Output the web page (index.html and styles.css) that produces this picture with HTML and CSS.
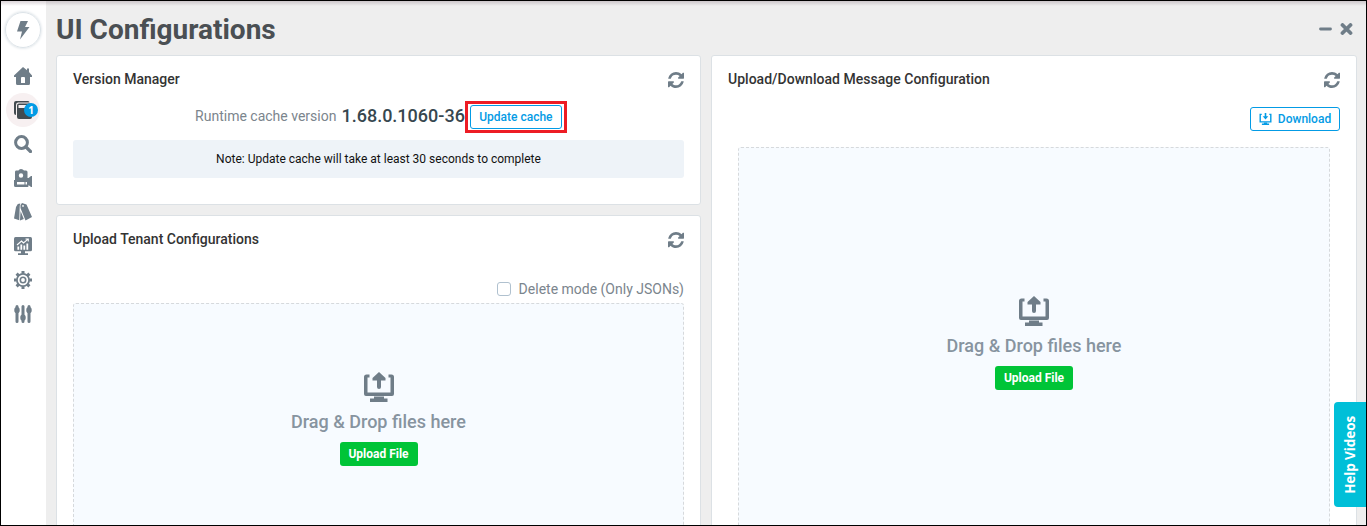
FILE: index.html
```html
<!DOCTYPE html>
<html lang="en">
<head>
<meta charset="utf-8">
<title>UI Configurations</title>
<link rel="stylesheet" href="styles.css">
</head>
<body>
<svg class="defs" aria-hidden="true">
  <symbol id="refresh" viewBox="0 0 1536 1536"><path d="M1511 928q0 5-1 7-64 268-268 434.500t-478 166.500q-146 0-282.500-55t-243.500-157l-129 129q-19 19-45 19t-45-19-19-45v-448q0-26 19-45t45-19h448q26 0 45 19t19 45-19 45l-137 137q71 66 161 102t187 36q134 0 250-65t186-179q11-17 53-117 8-23 30-23h192q13 0 22.500 9.500t9.500 22.500zm25-800v448q0 26-19 45t-45 19h-448q-26 0-45-19t-19-45 19-45l138-138q-148-137-349-137-134 0-250 65t-186 179q-11 17-53 117-8 23-30 23h-199q-13 0-22.500-9.500t-9.500-22.500v-7q65-268 270-434.500t480-166.500q146 0 284 55.500t245 156.500l130-129q19-19 45-19t45 19 19 45z"/></symbol>
  <symbol id="upload" viewBox="0 0 30 30"><path d="M5.500 2.500H2.500Q0 2.500 0 5V22Q0 24 2 24H28Q30 24 30 22V5Q30 2.500 27.500 2.500H24.500V5.500H26.500V20.500H3.500V5.500H5.500ZM10 24.500H20V26.500H23.500V30H6V26.500H10ZM15 0L21.500 6V8.500H17V15Q17 17 15 17T13 15V8.500H8.500V6Z"/></symbol>
  <symbol id="download" viewBox="0 0 30 30"><path d="M5.500 2H0V24H30V2H24.500V5H26.500V20.500H3.500V5H5.500ZM11 24.500H19V26.500H24V30H6V26.500H11ZM13 0H17V8H22L15 16L8 8H13Z"/></symbol>
</svg>
<div class="frame">
  <nav class="sidebar">
    <a class="logo"><svg width="14" height="20" viewBox="0 0 14 20"><path d="M4.500 1H12L9 7H13.500L4 19.500L6 11.500H1Z"/></svg></a>
    <a class="nav-item"><svg viewBox="0 0 18 18"><path fill-rule="evenodd" d="M9 0L13 3.300V1.500H15V5L18 8.500V10H16V16.500Q16 18 14.500 18H3.500Q2 18 2 16.500V10H0V8.500ZM7 11V16H11V11Q11 10 10 10H8Q7 10 7 11Z"/></svg></a>
    <a class="nav-item active"><svg viewBox="0 0 18 18"><path d="M2 0H14Q15.500 0 15.500 1.500H4Q2 1.500 2 4V14Q0 14 0 12V2Q0 0 2 0Z"/><path fill-rule="evenodd" d="M5 2.500H16Q18 2.500 18 4.500V16Q18 18 16 18H5Q3 18 3 16V4.500Q3 2.500 5 2.500ZM4.500 4V7H17V4Z"/></svg><span class="badge">1</span></a>
    <a class="nav-item"><svg viewBox="0 0 18 18"><circle cx="7.500" cy="7.500" r="5.900" fill="none" stroke="currentColor" stroke-width="3"/><path d="M12 12L16.500 16.500" stroke="currentColor" stroke-width="3.200" stroke-linecap="round"/></svg></a>
    <a class="nav-item"><svg viewBox="0 0 18 18"><path fill-rule="evenodd" d="M2 1.500H4.500Q5 0 7 0T10 1.500H12Q13.500 1.500 13.500 3V9H14.500L17 7H18V18H17L14.500 16V17Q14.500 18 13.500 18H1.500Q0 18 0 16.500V11H1V3Q1 1.500 2 1.500ZM7 4.300A2.200 2.200 0 1 0 7 8.700A2.200 2.200 0 1 0 7 4.300ZM3 13V15.500H10.500V13ZM11.500 13V15.500H13V13Z"/></svg></a>
    <a class="nav-item"><svg viewBox="0 0 18 18"><path fill-rule="evenodd" d="M3.800 1L6.300 .4Q5.700 2 5.700 4L5.300 17.300L0 15.500L2 4ZM8 0L12.500 1.500L18 14L11.500 17.500L6.500 5V2ZM9 2A.9 .9 0 1 0 9 3.800A.9 .9 0 1 0 9 2Z"/><path d="M6.600 8L9.800 16L6 17.400Z"/></svg></a>
    <a class="nav-item"><svg viewBox="0 0 18 18"><rect width="18" height="14.300" rx="1.500"/><path d="M7 14H11V16.300H14V18H4V16.300H7Z"/><g fill="none" stroke="#fff"><path stroke-width="1.800" d="M4.300 12.700V9.500M7.300 12.700V7.500M10.300 12.700V8.500M13.300 12.700V6.500"/><path stroke-width="1.100" d="M3 8L7.500 4L9.500 6L14 2.200M11.500 2H14.300V4.500"/></g></svg></a>
    <a class="nav-item"><svg viewBox="0 0 18 18"><g fill="none" stroke="currentColor"><circle cx="9" cy="9" r="6.100" stroke-width="1.800"/><circle cx="9" cy="9" r="2.700" stroke-width="1.600"/><path stroke-width="3" d="M9 0V2.800M9 15.200V18M0 9H2.800M15.200 9H18M2.600 2.600L4.600 4.600M13.400 13.400L15.400 15.400M2.600 15.400L4.600 13.400M13.400 4.600L15.400 2.600"/></g></svg></a>
    <a class="nav-item"><svg viewBox="0 0 18 18"><g stroke="currentColor" stroke-linecap="round"><path stroke-width="3" d="M3 1.500V16.500M9 1.500V16.500M15 1.500V16.500"/><path stroke-width="5.400" d="M3 4.800V5.600M9 12.200V13M15 4.800V5.600"/></g></svg></a>
  </nav>
  <main class="main">
    <header class="header">
      <h1 class="title">UI Configurations</h1>
      <svg class="controls" width="34" height="12" viewBox="0 0 34 12"><path d="M1.500 6H11.500" stroke-width="2.800"/><path d="M23.500 2L31.500 10M31.500 2L23.500 10" stroke-width="3.800"/></svg>
    </header>
    <div class="columns">
      <div class="column">
        <section class="card version">
          <div class="card-head"><h2>Version Manager</h2><svg class="refresh"><use href="#refresh"/></svg></div>
          <div class="runtime"><span class="label">Runtime cache version</span><strong>1.68.0.1060-36</strong><span class="highlight"><button class="outline update">Update cache</button></span></div>
          <div class="note">Note: Update cache will take at least 30 seconds to complete</div>
        </section>
        <section class="card tenant">
          <div class="card-head"><h2>Upload Tenant Configurations</h2><svg class="refresh"><use href="#refresh"/></svg></div>
          <label class="delete-mode"><span class="checkbox"></span>Delete mode (Only JSONs)</label>
          <div class="dropzone tenant-drop">
            <svg class="upload-icon"><use href="#upload"/></svg>
            <p>Drag &amp; Drop files here</p>
            <button class="upload-button">Upload File</button>
          </div>
        </section>
      </div>
      <section class="card message">
        <div class="card-head"><h2>Upload/Download Message Configuration</h2><svg class="refresh"><use href="#refresh"/></svg></div>
        <button class="outline download"><svg><use href="#download"/></svg>Download</button>
        <div class="dropzone message-drop">
          <svg class="upload-icon"><use href="#upload"/></svg>
          <p>Drag &amp; Drop files here</p>
          <button class="upload-button">Upload File</button>
        </div>
      </section>
    </div>
  </main>
  <div class="help"><span>Help Videos</span></div>
</div>
</body>
</html>
```
FILE: styles.css
```css
* { box-sizing: border-box; }
body { margin: 0; font-family: Roboto, "Liberation Sans", sans-serif; font-size: 14px; color: #333; }
h1, h2, p { margin: 0; }
button { font-family: inherit; margin: 0; }
.defs { display: none; }
.frame { position: relative; display: flex; width: 1367px; height: 526px; border: 1px solid #000; overflow: hidden; background: #eee; }
.frame::before { content: ""; position: absolute; left: 0; right: 0; top: 0; height: 5px; background: linear-gradient(rgba(70, 40, 60, .2), transparent); }
.sidebar { width: 45px; flex: none; background: #fff; display: flex; flex-direction: column; align-items: center; padding-top: 11px; color: #6f7d88; }
.logo { width: 36px; height: 36px; flex: none; margin: 0 1px 11px 0; border-radius: 50%; border: 1px solid #dce3e8; box-shadow: 0 0 3px #ccd5dc; display: flex; align-items: center; justify-content: center; }
.sidebar svg, .refresh, .upload-icon { fill: currentColor; }
.nav-item { position: relative; width: 34px; height: 34px; flex: none; display: flex; align-items: center; justify-content: center; margin-right: 1px; border-radius: 50%; }
.nav-item svg { width: 18px; height: 18px; }
.active { color: #434b50; background: #f7f0f1; }
.badge { position: absolute; left: 18px; top: 10px; width: 14px; height: 14px; border-radius: 50%; background: #039be5; color: #fff; font: 700 10px/14px "Open Sans", sans-serif; text-align: center; }
.main { flex: 1; min-width: 0; padding: 0 9px 0 10px; }
.header { height: 54px; display: flex; justify-content: space-between; align-items: center; padding-right: 4px; }
.title { font-size: 28px; line-height: 36px; font-weight: 700; color: #4a4f53; padding-top: 4px; }
.controls { stroke: #6f7d88; fill: none; stroke-linecap: round; margin-top: 2px; }
.columns { display: grid; grid-template-columns: 645px 646px; gap: 10px; align-items: start; }
.column { display: flex; flex-direction: column; gap: 10px; }
.card { background: #fff; border: 1px solid #dce1e5; border-radius: 3px; padding: 0 16px; }
.version { height: 150px; }
.tenant { height: 400px; }
.message { height: 560px; display: flex; flex-direction: column; }
.card-head { height: 47px; flex: none; display: flex; align-items: center; justify-content: space-between; padding-bottom: 2px; }
.card-head h2 { font-size: 14px; font-weight: 500; line-height: 20px; }
.message h2 { letter-spacing: .02px; }
.refresh { width: 16px; height: 16px; margin-top: 2px; color: #6f7d88; }
.runtime { height: 32px; margin-top: -2px; padding-left: 5px; display: flex; align-items: center; justify-content: center; }
.label { color: #7b858d; padding-bottom: 2px; }
.runtime strong { font-weight: 500; font-size: 18px; color: #37474f; margin-left: 5px; padding-bottom: 3px; }
.highlight { width: 102px; height: 32px; border: 3px solid #ed1c24; display: flex; align-items: center; justify-content: center; }
.outline { background: #fff; border: 1px solid #039be5; border-radius: 3px; color: #039be5; font-size: 12px; font-weight: 500; padding: 0; white-space: nowrap; }
.update { width: 92px; height: 24px; }
.note { height: 38px; line-height: 38px; margin-top: 7px; background: #eef3f8; border-radius: 3px; color: #111; text-align: center; font-size: 12px; }
.delete-mode { display: flex; align-items: center; justify-content: flex-end; height: 20px; margin-top: 16px; color: #7b858d; }
.checkbox { width: 14px; height: 14px; border: 1px solid #b0c1cf; border-radius: 3px; margin-right: 8px; }
.dropzone { border: 1px dashed #d6d9dc; border-radius: 3px; background: #f7fbff; display: flex; flex-direction: column; align-items: center; color: #6f7d88; }
.tenant-drop { height: 300px; margin-top: 4px; padding-top: 68px; }
.message-drop { height: 390px; margin: 16px 10px 0; padding-top: 148px; }
.upload-icon { width: 30px; height: 30px; flex: none; }
.dropzone p { font-size: 18px; line-height: 20px; font-weight: 500; color: #87949f; margin: 10px 0; }
.upload-button { width: 78px; height: 24px; padding: 0; border: 0; border-radius: 3px; background: #00c437; color: #fff; font-size: 12px; font-weight: 700; }
.download { align-self: flex-end; width: 90px; height: 24px; margin-top: 4px; display: flex; align-items: center; justify-content: center; gap: 6px; flex: none; }
.download svg { width: 13px; height: 12px; fill: currentColor; }
.help { position: absolute; right: 0; top: 401px; width: 32px; height: 105px; border-radius: 4px 0 0 4px; background: #00bfd8; color: #fff; display: flex; align-items: center; justify-content: center; }
.help span { writing-mode: vertical-rl; transform: rotate(180deg); font: 700 13.5px/20px "Open Sans", sans-serif; letter-spacing: -.1px; white-space: nowrap; }
```
